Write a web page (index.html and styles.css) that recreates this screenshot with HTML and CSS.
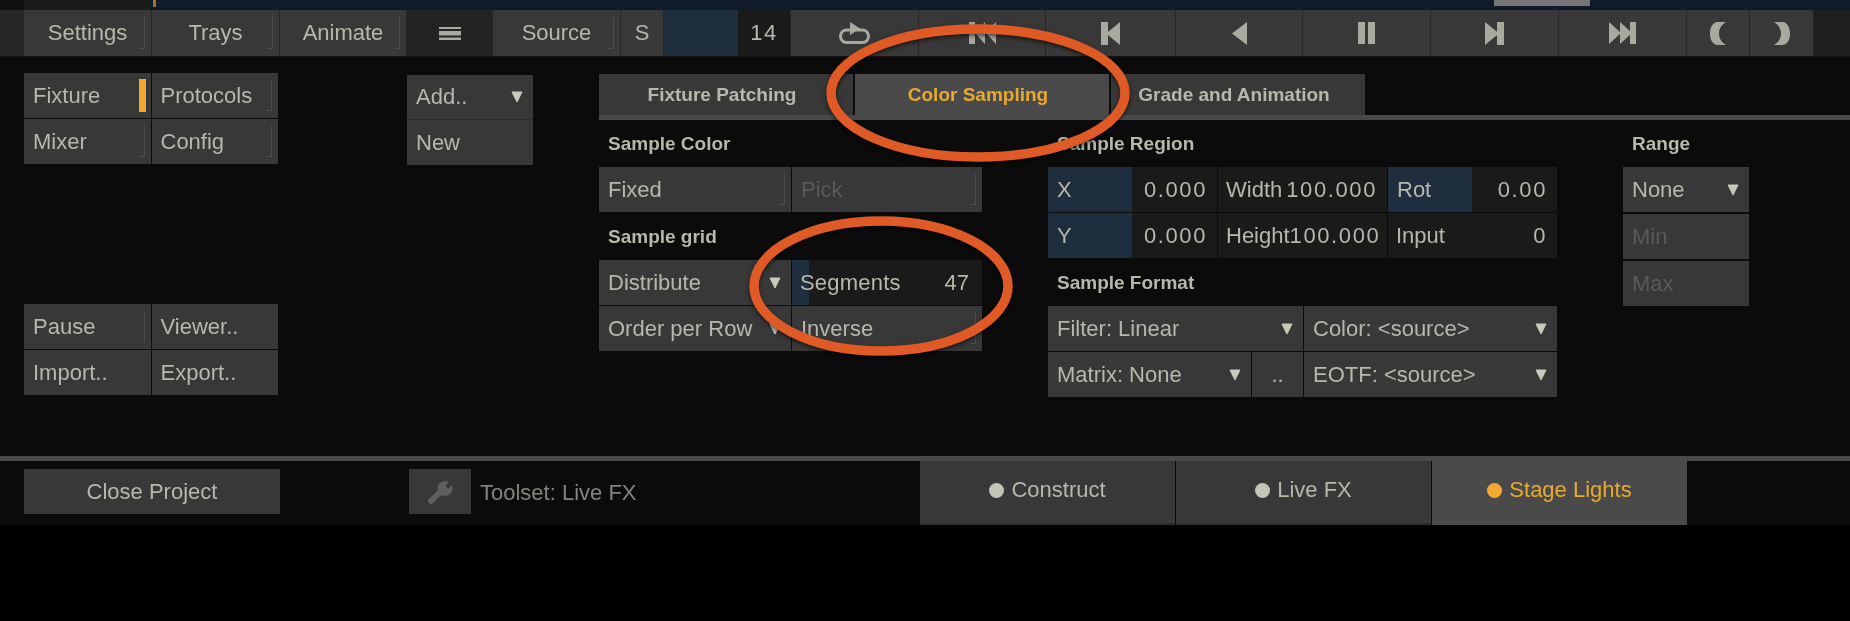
FILE: index.html
```html
<!DOCTYPE html>
<html lang="en">
<head>
    <meta charset="UTF-8">
    <meta name="viewport" content="width=device-width, initial-scale=1.0">
    <title>Stage Lights</title>
    <link rel="stylesheet" href="styles.css">
</head>
<body>
    <svg class="defs" width="0" height="0">
      <symbol id="arrow" viewBox="0 0 12 12"><path d="M1 1H11L6 11Z" fill="currentColor" stroke="currentColor" stroke-linejoin="round"/></symbol>
    </svg>

    <div class="app">
      <div class="strip">
        <div class="strip-left"></div>
        <div class="strip-track">
          <span class="strip-mark"></span>
          <span class="strip-thumb"></span>
        </div>
      </div>

      <div class="toolbar">
        <div class="btn center tog">Settings</div>
        <div class="btn center tog">Trays</div>
        <div class="btn center tog">Animate</div>
        <div class="btn center dark">
          <svg width="22" height="13" viewBox="0 0 22 13"><path d="M0 0H22V2H0ZM0 4H22V8.500H0ZM0 10.500H22V13H0Z" fill="currentColor"/></svg>
        </div>
        <div class="btn center tog">Source</div>
        <div class="btn center">S</div>
        <div class="counter">
          <span class="counter-fill"></span>
          <span class="counter-value">14</span>
        </div>
        <div class="btn center">
          <svg width="31" height="22" viewBox="0 0 31 22"><rect x="1.500" y="8" width="28" height="12.500" rx="6" fill="none" stroke="currentColor" stroke-width="3"/><path d="M11 0L21 6.500L11 13Z" fill="currentColor"/></svg>
        </div>
        <div class="btn center">
          <svg width="27" height="22" viewBox="0 0 27 22"><path d="M0 0H6V22H0ZM16 0V22L6 11ZM27 0V22L17 11Z" fill="currentColor"/></svg>
        </div>
        <div class="btn center">
          <svg width="19" height="23" viewBox="0 0 19 23"><path d="M0 0H7V23H0ZM19 0V23L5 11.500Z" fill="currentColor"/></svg>
        </div>
        <div class="btn center">
          <svg width="15" height="23" viewBox="0 0 15 23"><path d="M15 0V23L0 11.500Z" fill="currentColor"/></svg>
        </div>
        <div class="btn center">
          <svg width="17" height="22" viewBox="0 0 17 22"><path d="M0 0H7V22H0ZM10 0H17V22H10Z" fill="currentColor"/></svg>
        </div>
        <div class="btn center">
          <svg width="19" height="23" viewBox="0 0 19 23"><path d="M0 0L14 11.500L0 23ZM12 0H19V23H12Z" fill="currentColor"/></svg>
        </div>
        <div class="btn center">
          <svg width="27" height="22" viewBox="0 0 27 22"><path d="M0 0L12 11L0 22ZM11 0L23 11L11 22ZM21 0H27V22H21Z" fill="currentColor"/></svg>
        </div>
        <div class="btn center">
          <svg width="16" height="23" viewBox="0 0 16 23"><path d="M16 0H7C2 1 0 6 0 11.500S2 22 7 23H16C11 20 9 16 9 11.500S11 3 16 0Z" fill="currentColor"/></svg>
        </div>
        <div class="btn center">
          <svg width="16" height="23" viewBox="0 0 16 23"><path d="M0 0H9C14 1 16 6 16 11.500S14 22 9 23H0C5 20 7 16 7 11.500S5 3 0 0Z" fill="currentColor"/></svg>
        </div>
        <div class="toolbar-rest"></div>
      </div>

      <div class="main">
        <div class="side">
          <div class="grid-2">
            <div class="btn lit">Fixture</div>
            <div class="btn tog">Protocols</div>
            <div class="btn tog">Mixer</div>
            <div class="btn tog">Config</div>
          </div>
          <div class="grid-2 side-lower">
            <div class="btn line">Pause</div>
            <div class="btn">Viewer..</div>
            <div class="btn">Import..</div>
            <div class="btn">Export..</div>
          </div>
        </div>

        <div class="add-col">
          <div class="btn menu">Add.. <svg class="arrow"><use href="#arrow"/></svg></div>
          <div class="btn">New</div>
        </div>

        <div class="tab-area">
          <div class="tabs">
            <div class="tab">Fixture Patching</div>
            <div class="tab active">Color Sampling</div>
            <div class="tab">Grade and Animation</div>
          </div>
          <div class="tab-rule"></div>

          <div class="columns">
            <div class="col col-a">
              <div class="label">Sample Color</div>
              <div class="grid-2 group">
                <div class="btn tog">Fixed</div>
                <div class="btn tog off">Pick</div>
              </div>
              <div class="label">Sample grid</div>
              <div class="grid-2 group">
                <div class="btn menu">Distribute <svg class="arrow"><use href="#arrow"/></svg></div>
                <div class="field slider"><span class="slider-fill"></span><span class="field-name">Segments</span><span class="val">47</span></div>
                <div class="btn menu">Order per Row <svg class="arrow"><use href="#arrow"/></svg></div>
                <div class="btn tog">Inverse</div>
              </div>
            </div>

            <div class="col col-b">
              <div class="label">Sample Region</div>
              <div class="region group">
                <div class="field split"><span class="field-key">X</span><span class="val">0.000</span></div>
                <div class="field"><span class="field-name">Width</span><span class="val">100.000</span></div>
                <div class="field split"><span class="field-key">Rot</span><span class="val">0.00</span></div>
                <div class="field split"><span class="field-key">Y</span><span class="val">0.000</span></div>
                <div class="field"><span class="field-name">Height</span><span class="val">100.000</span></div>
                <div class="field"><span class="field-name">Input</span><span class="val">0</span></div>
              </div>
              <div class="label">Sample Format</div>
              <div class="format">
                <div class="btn menu span-2">Filter: Linear <svg class="arrow"><use href="#arrow"/></svg></div>
                <div class="btn menu">Color: &lt;source&gt; <svg class="arrow"><use href="#arrow"/></svg></div>
                <div class="btn menu">Matrix: None <svg class="arrow"><use href="#arrow"/></svg></div>
                <div class="btn center">..</div>
                <div class="btn menu">EOTF: &lt;source&gt; <svg class="arrow"><use href="#arrow"/></svg></div>
              </div>
            </div>

            <div class="col col-c">
              <div class="label">Range</div>
              <div class="stack">
                <div class="btn menu">None <svg class="arrow"><use href="#arrow"/></svg></div>
                <div class="btn off">Min</div>
                <div class="btn off">Max</div>
              </div>
            </div>
          </div>
        </div>
      </div>

      <div class="bottom">
        <div class="btn center close">Close Project</div>
        <div class="btn center tool">
          <svg width="25" height="24" viewBox="0 0 25 24"><path d="M3 21L13 11" fill="none" stroke="currentColor" stroke-width="6" stroke-linecap="round"/><path d="M17 1A7.500 7.500 0 1 0 24.500 9L24 5L20.500 8.500L17.500 6.500L20.500 1.500Z" fill="currentColor"/></svg>
        </div>
        <div class="toolset">Toolset: Live FX</div>
        <div class="mode"><span class="dot"></span>Construct</div>
        <div class="mode"><span class="dot"></span>Live FX</div>
        <div class="mode current"><span class="dot"></span>Stage Lights</div>
      </div>

      <svg class="marks" width="1850" height="621" viewBox="0 0 1850 621">
        <ellipse cx="978" cy="93" rx="147" ry="64"/>
        <ellipse cx="881" cy="286" rx="127" ry="65"/>
      </svg>
    </div>
</body>
</html>
```

FILE: styles.css
```css
body {
  margin: 0;
  background: #000;
  font-family: 'Liberation Sans', Arial, sans-serif;
  font-size: 22px;
  color: #b8b7ac;
}

.defs {
  position: absolute;
}

.app {
  position: relative;
  width: 1850px;
  height: 525px;
  background: #0b0b0b;
  filter: blur(0.5px);
  display: flex;
  flex-direction: column;
}

/* timeline strip */
.strip {
  height: 10px;
  display: flex;
}

.strip-left {
  width: 150px;
  background: #1b1a18;
  border-left: 24px solid #101010;
  box-sizing: border-box;
}

.strip-track {
  flex: 1;
  display: flex;
  background: #0f1b2a;
}

.strip-mark {
  width: 3px;
  height: 7px;
  margin-left: 3px;
  background: #a5762a;
}

.strip-thumb {
  width: 96px;
  height: 6px;
  margin-left: 1338px;
  background: #767676;
}

/* toolbar */
.toolbar {
  height: 47px;
  padding-left: 24px;
  background: #262626;
  border-bottom: 1px solid #141414;
  box-sizing: border-box;
  display: grid;
  grid-template-columns: 127px 127px 126px 85px 127px 42px 126px 127px 126px 129px 126px 127px 127px 127px 62px 63px 1fr;
  column-gap: 1px;
}

.toolbar svg {
  color: #aaa9a0;
}

.toolbar-rest {
  background: #1e1e1e;
}

.btn {
  position: relative;
  background: #383838;
  padding-left: 9px;
  display: flex;
  align-items: center;
  white-space: nowrap;
  box-sizing: border-box;
}

.btn.center {
  padding-left: 0;
  justify-content: center;
}

.btn.dark {
  background: #232323;
}

.btn.off {
  color: #5a5a58;
}

.btn.tog::after {
  content: "";
  position: absolute;
  top: 7px;
  bottom: 7px;
  right: 6px;
  width: 5px;
  border-right: 1px solid #4c4c4c;
  border-bottom: 1px solid #4c4c4c;
}

.btn.line::after {
  content: "";
  position: absolute;
  top: 7px;
  bottom: 7px;
  right: 6px;
  border-right: 1px solid #4c4c4c;
}

.btn.lit::after {
  content: "";
  position: absolute;
  top: 6px;
  bottom: 6px;
  right: 5px;
  width: 7px;
  background: #f0a830;
}

.btn.menu {
  justify-content: space-between;
  padding-right: 10px;
}

.arrow {
  width: 12px;
  height: 12px;
  color: #c9c8bd;
  flex-shrink: 0;
}

.counter {
  display: flex;
  background: #1a1a1a;
}

.counter-fill {
  width: 74px;
  background: #1e2e3f;
}

.counter-value {
  flex: 1;
  text-align: center;
  line-height: 46px;
  letter-spacing: 1.500px;
}

/* main panel */
.main {
  height: 399px;
  display: flex;
  align-items: flex-start;
}

.grid-2 {
  display: grid;
  grid-template-columns: 1fr 1fr;
  grid-auto-rows: 45px;
  gap: 1px;
}

.side {
  width: 254px;
  margin-left: 24px;
  padding-top: 16px;
}

.side-lower {
  margin-top: 140px;
}

.add-col {
  width: 126px;
  margin-left: 129px;
  padding-top: 18px;
  display: grid;
  grid-auto-rows: 45px;
}

.add-col .menu {
  border-bottom: 1px solid #2c2c2c;
}

.tab-area {
  flex: 1;
  margin-left: 66px;
  padding-top: 17px;
}

.tabs {
  height: 41px;
  display: flex;
  gap: 2px;
}

.tab {
  width: 254px;
  height: 41px;
  padding-right: 8px;
  background: #383838;
  font-size: 19px;
  font-weight: bold;
  display: flex;
  align-items: center;
  justify-content: center;
  box-sizing: border-box;
}

.tab.active {
  position: relative;
  height: 46px;
  padding-bottom: 5px;
  background: #4a4a4a;
  color: #e8a92f;
}

.tab-rule {
  height: 5px;
  background: #4a4a4a;
}

.columns {
  height: 300px;
  display: flex;
  gap: 66px;
}

.col-a {
  width: 383px;
}

.col-b {
  width: 509px;
}

.col-c {
  width: 126px;
}

.label {
  height: 47px;
  padding-left: 9px;
  font-size: 19px;
  font-weight: bold;
  line-height: 47px;
  box-sizing: border-box;
}

.group {
  margin-bottom: 1px;
}

.col-a .grid-2 {
  grid-template-columns: 192px 190px;
}

.stack {
  display: grid;
  grid-auto-rows: 45px;
  row-gap: 2px;
}

/* number fields */
.region {
  display: grid;
  grid-template-columns: 169px 169px 169px;
  grid-auto-rows: 45px;
  gap: 1px;
}

.field {
  position: relative;
  background: #1a1a1a;
  padding: 0 10px 0 8px;
  display: flex;
  align-items: center;
  justify-content: space-between;
  white-space: nowrap;
  box-sizing: border-box;
}

.field.split {
  padding-left: 0;
}

.field-key {
  align-self: stretch;
  width: 84px;
  padding-left: 9px;
  background: #1e2e3f;
  display: flex;
  align-items: center;
  box-sizing: border-box;
}

.field-name {
  position: relative;
}

.val {
  position: relative;
  letter-spacing: 1.600px;
}

.slider {
  padding-right: 13px;
}

.slider .val {
  letter-spacing: 0;
}

.slider .field-name {
  letter-spacing: 0.200px;
}

.slider-fill {
  position: absolute;
  top: 0;
  bottom: 0;
  left: 0;
  width: 17px;
  background: #1e2e3f;
}

.format {
  display: grid;
  grid-template-columns: 203px 51px 253px;
  grid-template-rows: 45px 45px;
  gap: 1px;
}

.format .menu:first-child {
  grid-column: span 2;
}

/* bottom bar */
.bottom {
  flex: 1;
  padding-left: 24px;
  border-top: 5px solid #4a4a4a;
  display: flex;
  align-items: flex-start;
}

.close {
  width: 256px;
  height: 45px;
  margin-top: 8px;
}

.tool {
  width: 62px;
  height: 45px;
  margin: 8px 0 0 129px;
  color: #5f5f5f;
}

.toolset {
  width: 440px;
  height: 45px;
  margin: 8px 0 0 9px;
  color: #83827c;
  line-height: 47px;
}

.mode {
  width: 255px;
  height: 64px;
  margin-right: 1px;
  background: #383838;
  border-bottom: 2px solid #2e2e2e;
  display: flex;
  align-items: center;
  justify-content: center;
  gap: 7px;
  padding-bottom: 4px;
  box-sizing: border-box;
}

.mode.current {
  background: #4a4a4a;
  border-bottom-color: #4a4a4a;
  color: #e8a92f;
}

.dot {
  width: 15px;
  height: 15px;
  border-radius: 50%;
  background: #c4c3b8;
}

.current .dot {
  background: #f2aa35;
}

/* annotation ellipses */
.marks {
  position: absolute;
  top: 0;
  left: 0;
  filter: drop-shadow(0 2px 2px rgba(0, 0, 0, 0.6));
}

.marks ellipse {
  fill: none;
  stroke: #e05a26;
  stroke-width: 9.500;
}
```
